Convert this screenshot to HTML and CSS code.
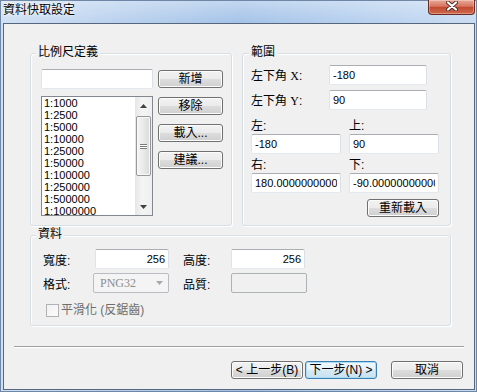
FILE: index.html
```html
<!DOCTYPE html>
<html lang="zh-Hant">
<head>
    <meta charset="UTF-8">
    <title>資料快取設定</title>
    <link rel="stylesheet" href="styles.css">
</head>
<body>
    <div class="window">
        <div class="titlebar">
            <span class="title">資料快取設定</span>
            <button class="close" aria-label="關閉">
                <svg width="12" height="10" viewBox="0 0 12 10">
                    <path d="M2 1.5 L10 8.5 M10 1.5 L2 8.5" stroke="#4a2a25" stroke-width="4" stroke-linecap="round"/>
                    <path d="M2 1.5 L10 8.5 M10 1.5 L2 8.5" stroke="#fff" stroke-width="2.2" stroke-linecap="round"/>
                </svg>
            </button>
        </div>

        <div class="client">
            <div class="content">
                <div class="top-row">
                    <!-- Scale list -->
                    <div class="group scale-group">
                        <div class="group-title">比例尺定義</div>
                        <div class="scale-body">
                            <div class="scale-left">
                                <input type="text" class="field scale-input">
                                <div class="listbox">
                                    <ul class="list-items">
                                        <li>1:1000</li>
                                        <li>1:2500</li>
                                        <li>1:5000</li>
                                        <li>1:10000</li>
                                        <li>1:25000</li>
                                        <li>1:50000</li>
                                        <li>1:100000</li>
                                        <li>1:250000</li>
                                        <li>1:500000</li>
                                        <li>1:1000000</li>
                                    </ul>
                                    <div class="vscroll">
                                        <div class="arrow">
                                            <svg width="7" height="4" viewBox="0 0 7 4"><path d="M0 4 L3.5 0 L7 4z"/></svg>
                                        </div>
                                        <div class="track">
                                            <div class="thumb"><span class="grip"></span></div>
                                        </div>
                                        <div class="arrow">
                                            <svg width="7" height="4" viewBox="0 0 7 4"><path d="M0 0 L3.5 4 L7 0z"/></svg>
                                        </div>
                                    </div>
                                </div>
                            </div>
                            <div class="scale-buttons">
                                <button class="btn">新增</button>
                                <button class="btn">移除</button>
                                <button class="btn">載入...</button>
                                <button class="btn">建議...</button>
                            </div>
                        </div>
                    </div>

                    <!-- Extent -->
                    <div class="group range-group">
                        <div class="group-title">範圍</div>
                        <div class="range-body">
                            <div class="coord-row">
                                <label>左下角 <span class="latin">X</span>:</label>
                                <input type="text" class="field num coord-input" value="-180">
                            </div>
                            <div class="coord-row">
                                <label>左下角 <span class="latin">Y</span>:</label>
                                <input type="text" class="field num coord-input" value="90">
                            </div>
                            <div class="edge-grid">
                                <div class="edge-cell">
                                    <label>左:</label>
                                    <input type="text" class="field num" value="-180">
                                </div>
                                <div class="edge-cell">
                                    <label>上:</label>
                                    <input type="text" class="field num" value="90">
                                </div>
                                <div class="edge-cell">
                                    <label>右:</label>
                                    <input type="text" class="field num" value="180.00000000000007">
                                </div>
                                <div class="edge-cell">
                                    <label>下:</label>
                                    <input type="text" class="field num" value="-90.000000000003">
                                </div>
                            </div>
                            <div class="reload-row">
                                <button class="btn reload-btn">重新載入</button>
                            </div>
                        </div>
                    </div>
                </div>

                <!-- Data -->
                <div class="group data-group">
                    <div class="group-title">資料</div>
                    <div class="data-body">
                        <div class="data-grid">
                            <label>寬度:</label>
                            <input type="text" class="field num right size-input" value="256">
                            <label class="second">高度:</label>
                            <input type="text" class="field num right size-input" value="256">

                            <label>格式:</label>
                            <div class="combo disabled">
                                <span class="latin">PNG32</span>
                                <svg width="7" height="4" viewBox="0 0 7 4"><path d="M0 0 L3.5 4 L7 0z"/></svg>
                            </div>
                            <label class="second">品質:</label>
                            <input type="text" class="field quality-input" disabled>
                        </div>
                        <div class="check-row">
                            <span class="checkbox"></span>
                            <span class="check-label">平滑化 (反鋸齒)</span>
                        </div>
                    </div>
                </div>
            </div>

            <div class="separator"></div>

            <div class="footer">
                <button class="btn wide back-btn">&lt; 上一步(B)</button>
                <button class="btn wide default next-btn">下一步(N) &gt;</button>
                <button class="btn wide">取消</button>
            </div>
        </div>
    </div>
</body>
</html>
```

FILE: styles.css
```css
body {
    margin: 0;
    font: 12px "Liberation Sans", "Noto Sans CJK TC", sans-serif;
    color: #000;
}
.window {
    width: 477px;
    height: 392px;
    box-sizing: border-box;
    padding: 0 2px 2px 3px;
    display: flex;
    flex-direction: column;
    background:
        linear-gradient(rgba(255, 255, 255, 0.35), rgba(255, 255, 255, 0) 24px),
        linear-gradient(to right, #cfe0f3 0%, #b8d0ed 25%, #a3c2e8 50%, #b5cfee 75%, #c8dbf2 100%);
    box-shadow: inset 0 0 0 1px #6f86a6;
}
.titlebar {
    height: 23px;
    flex-shrink: 0;
    display: flex;
    justify-content: space-between;
    align-items: flex-start;
}
.title {
    padding-top: 3px;
    line-height: 14px;
    text-shadow: 0 0 5px #fff, 0 0 2px #fff;
}
.close {
    width: 47px;
    height: 15px;
    padding: 0 0 3px;
    border: 1px solid #6a2b22;
    border-top: none;
    border-radius: 0 0 4px 4px;
    background: linear-gradient(#eaa999, #d77560 45%, #c24a32 52%, #cf6a4c 100%);
    box-shadow: inset 0 0 0 1px rgba(255, 255, 255, 0.3);
    display: flex;
    align-items: center;
    justify-content: center;
}
.client {
    flex: 1;
    background: #f0f0f0;
    border: 1px solid #56677d;
    display: flex;
    flex-direction: column;
}
.content {
    padding: 29px 23px 0 26px;
}
.top-row {
    display: flex;
    gap: 10px;
}
.group {
    box-sizing: border-box;
    border: 1px solid #d5dfe5;
    border-radius: 3px;
    box-shadow: inset 1px 1px #fff, 1px 1px #fff;
}
.group-title {
    display: table;
    margin: -9px 0 0 5px;
    padding: 0 2px;
    line-height: 14px;
    background: #f0f0f0;
}
.scale-group {
    width: 202px;
    height: 173px;
}
.range-group {
    width: 209px;
    height: 173px;
}
.range-group .group-title {
    margin-left: 6px;
}
.data-group {
    margin-top: 9px;
}

/* inputs and buttons */
.field {
    box-sizing: border-box;
    height: 20px;
    margin: 0;
    padding: 0 3px;
    border: 1px solid;
    border-color: #abadb3 #dbdfe6 #e3e9ef #e2e3ea;
    border-radius: 2px;
    background: #fff;
    font: 12px "Liberation Sans", "Noto Sans CJK TC", sans-serif;
    color: #000;
    outline: none;
}
.num {
    font-size: 11px;
}
.right {
    text-align: right;
}
.latin {
    font-family: "Liberation Serif", serif;
}
.btn {
    box-sizing: border-box;
    height: 18px;
    width: 65px;
    padding: 0;
    border: 1px solid #707070;
    border-radius: 3px;
    background: linear-gradient(#f2f2f2, #ebebeb 50%, #dddddd 50%, #cfcfcf);
    box-shadow: inset 0 0 0 1px #fcfcfc;
    font: 12px "Liberation Sans", "Noto Sans CJK TC", sans-serif;
    line-height: 14px;
    color: #000;
}
.btn.default {
    border-color: #3c7fb1;
    box-shadow: inset 0 0 0 1px #a9dcf7;
    background: linear-gradient(#f0f8fd, #e6f2fa 50%, #d6e9f5 50%, #c9e1f1);
}

/* scale group */
.scale-body {
    display: flex;
    gap: 5px;
    padding: 10px 0 0 10px;
}
.scale-left {
    width: 112px;
    display: flex;
    flex-direction: column;
    gap: 7px;
}
.scale-input {
    width: 112px;
}
.listbox {
    box-sizing: border-box;
    height: 120px;
    border: 1px solid #828790;
    background: #fff;
    display: flex;
    overflow: hidden;
}
.list-items {
    flex: 1;
    list-style: none;
    margin: 0;
    padding: 0 0 0 2px;
    font-size: 11px;
    line-height: 12px;
    overflow: hidden;
}
.vscroll {
    width: 17px;
    display: flex;
    flex-direction: column;
    background: linear-gradient(to right, #e6e6e6, #f4f4f4 40%, #efefef);
}
.arrow {
    height: 17px;
    display: flex;
    align-items: center;
    justify-content: center;
    fill: #404040;
}
.track {
    flex: 1;
    padding: 2px 1px 0;
}
.thumb {
    height: 60px;
    box-sizing: border-box;
    border: 1px solid #979797;
    border-radius: 2px;
    background: linear-gradient(to right, #f5f5f5, #e9e9e9 50%, #d9d9d9);
    box-shadow: inset 0 0 0 1px #fafafa;
    display: flex;
    align-items: center;
    justify-content: center;
}
.grip {
    width: 7px;
    height: 5px;
    border-top: 1px solid #7a7a7a;
    border-bottom: 1px solid #7a7a7a;
    background: linear-gradient(#fff 0 1px, #7a7a7a 1px 2px, #fff 2px 3px, #7a7a7a 3px 4px, #fff 4px);
    box-sizing: border-box;
}
.scale-buttons {
    display: flex;
    flex-direction: column;
    gap: 9px;
    padding-top: 1px;
}

/* range group */
.range-body {
    padding: 6px 0 0 8px;
}
.coord-row {
    height: 20px;
    display: flex;
    align-items: center;
}
.coord-row + .coord-row {
    margin-top: 5px;
}
.coord-row label {
    width: 78px;
}
.coord-input {
    width: 98px;
}
.edge-grid {
    margin-top: 9px;
    display: grid;
    grid-template-columns: 90px 90px;
    column-gap: 8px;
    row-gap: 4px;
}
.edge-cell label {
    display: block;
    line-height: 14px;
}
.edge-cell .field {
    width: 90px;
    margin-top: 1px;
}
.reload-row {
    width: 188px;
    margin-top: 6px;
    display: flex;
    justify-content: flex-end;
}
.reload-btn {
    width: 72px;
}

/* data group */
.data-body {
    padding: 8px 0 8px 12px;
}
.data-grid {
    display: grid;
    grid-template-columns: 50px 76px 62px 76px;
    grid-auto-rows: 20px;
    row-gap: 4px;
    align-items: center;
}
.data-grid .second {
    padding-left: 14px;
}
.size-input {
    width: 74px;
    justify-self: end;
}
.data-grid .size-input:nth-of-type(2) {
    justify-self: start;
}
.combo {
    box-sizing: border-box;
    height: 20px;
    padding: 0 5px 0 6px;
    border: 1px solid #b9bcc0;
    border-radius: 2px;
    background: #f4f4f4;
    display: flex;
    align-items: center;
    justify-content: space-between;
}
.combo.disabled {
    color: #8d8d8d;
    fill: #a8a8a8;
}
.quality-input {
    width: 76px;
    background: #f0f0f0;
    border-color: #adb2b5;
}
.check-row {
    margin: 10px 0 0 3px;
    display: flex;
    align-items: center;
    gap: 2px;
    line-height: 14px;
    color: #6d6d6d;
}
.checkbox {
    width: 13px;
    height: 13px;
    box-sizing: border-box;
    border: 1px solid #b1b1b1;
    background: linear-gradient(135deg, #f1f1f1, #fbfbfb);
}

/* footer */
.separator {
    margin: 20px 10px 0;
    border-top: 1px solid #a0a0a0;
    border-bottom: 1px solid #fff;
}
.footer {
    display: flex;
    justify-content: flex-end;
    padding: 13px 11px 0 0;
}
.wide {
    width: 72px;
}
.back-btn {
    margin-right: 2px;
}
.next-btn {
    margin-right: 14px;
}
```
